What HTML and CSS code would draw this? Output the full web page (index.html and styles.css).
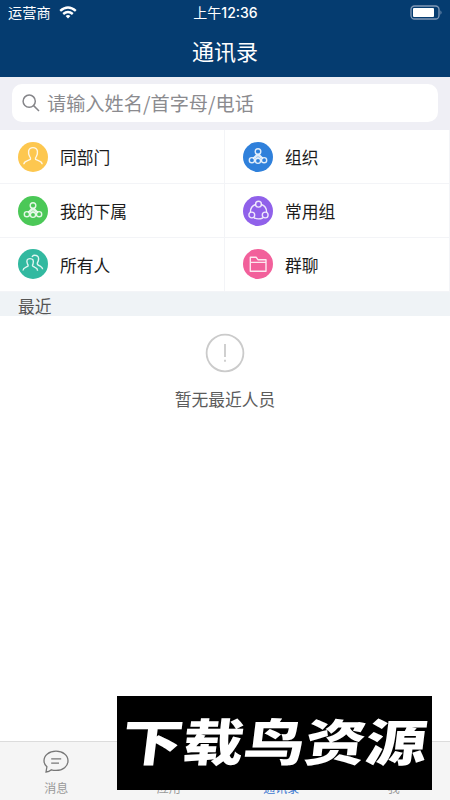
FILE: index.html
```html
<!DOCTYPE html>
<html lang="zh-CN">
<head>
<meta charset="utf-8">
<title>通讯录</title>
<link rel="stylesheet" href="styles.css">
</head>
<body>
<header class="header">
  <div class="status">
    <div class="carrier"><span>运营商</span>
      <svg width="18" height="13" viewBox="0 0 18 13" fill="none" stroke="#fff" stroke-width="2.4"><path d="M1.2 4.8Q9-2 16.8 4.8M4.2 8Q9 3.8 13.8 8"/><path d="M9 12.5 6.6 10.1Q9 8.1 11.4 10.1Z" fill="#fff" stroke="none"/></svg>
    </div>
    <div class="time">上午<b>12:36</b></div>
    <svg class="battery" width="33" height="15" viewBox="0 0 33 15"><rect x="1" y="1" width="28" height="13" rx="3.5" fill="none" stroke="#8299b7" stroke-width="1.3"/><rect x="3" y="3" width="21" height="9" rx="1" fill="#fff"/><path d="M30.5 5.2q2 2.3 0 4.6z" fill="#8299b7"/></svg>
  </div>
  <h1 class="title">通讯录</h1>
</header>
<div class="search">
  <div class="field">
    <svg width="18" height="18" viewBox="0 0 18 18" fill="none" stroke="#858589" stroke-width="1.5"><circle cx="7.2" cy="7.2" r="6.1"/><path d="m11.6 11.6 5.4 5.4"/></svg>
    <span>请输入姓名/首字母/电话</span>
  </div>
</div>
<main class="main">
  <div class="grid">
    <div class="cell"><svg class="icon" viewBox="0 0 30 30"><circle cx="15" cy="15" r="15" fill="#fdc74f"/><path d="M5.8 22.2Q6 19.8 9 18.8L12.4 17.4Q13 16.2 11.6 14.4Q10.2 11.8 10.6 9Q11.4 5.6 15 5.6T19.4 9Q19.8 11.8 18.4 14.4Q17 16.2 17.6 17.4L21 18.8Q24 19.8 24.2 22.2"/></svg><span>同部门</span></div>
    <div class="cell"><svg class="icon" viewBox="0 0 30 30"><circle cx="15" cy="15" r="15" fill="#2f80db"/><path d="m14 12.4-4 4.2m6-4.2 4 4.2M15 12.4v3.8m-1-3.8-1.5 4m3.5-4 1.5 4"/><circle cx="15" cy="9.5" r="2.8"/><circle cx="8.9" cy="18.2" r="2.6"/><circle cx="15" cy="18.8" r="2.6"/><circle cx="21.1" cy="18.2" r="2.6"/></svg><span>组织</span></div>
    <div class="cell"><svg class="icon" viewBox="0 0 30 30"><circle cx="15" cy="15" r="15" fill="#4bc857"/><path d="m14 12.4-4 4.2m6-4.2 4 4.2M15 12.4v3.8m-1-3.8-1.5 4m3.5-4 1.5 4"/><circle cx="15" cy="9.5" r="2.8"/><circle cx="8.9" cy="18.2" r="2.6"/><circle cx="15" cy="18.8" r="2.6"/><circle cx="21.1" cy="18.2" r="2.6"/></svg><span>我的下属</span></div>
    <div class="cell"><svg class="icon" viewBox="0 0 30 30"><circle cx="15" cy="15" r="15" fill="#9061ea"/><path d="M12.6 8.5Q7.4 10 7.4 16.2M18.4 8.5Q23.6 10 23.6 16.2M11 21.8Q15.5 24 20 21.8"/><circle cx="15.5" cy="8.2" r="2.9"/><circle cx="8.8" cy="19" r="2.9"/><circle cx="22.2" cy="19" r="2.9"/></svg><span>常用组</span></div>
    <div class="cell"><svg class="icon" viewBox="0 0 30 30"><circle cx="15" cy="15" r="15" fill="#32b9a0"/><path d="M5 21.5Q5.2 19.2 7.6 18.4L10 17.2Q10.5 16.3 9.5 15Q7.5 9.6 12 9.6T15 15Q14 16.5 14.8 17.2L17 18.3Q19.5 19.3 19.6 21.7M14 8Q15 6 17.3 6.3Q21.8 6.7 20.2 12.2Q18.5 15 20 16L22.2 17.1Q24.5 18.3 24.7 20.3"/></svg><span>所有人</span></div>
    <div class="cell"><svg class="icon" viewBox="0 0 30 30"><circle cx="15" cy="15" r="15" fill="#f2609b"/><path d="M7.3 8.2h5.8l1.8 2.5H23v11.5H7.3zM7.3 13.4H23"/></svg><span>群聊</span></div>
  </div>
  <div class="recent">最近</div>
  <div class="empty">
    <svg width="40" height="40" viewBox="0 0 40 40" fill="none" stroke="#cbcbcb" stroke-width="1.8"><circle cx="20" cy="20" r="18.4"/><path d="M20 11v13M20 26.8v1.9"/></svg>
    <p>暂无最近人员</p>
  </div>
</main>
<nav class="tabs">
  <div class="tab"><svg width="26" height="24" viewBox="0 0 26 24" fill="none" stroke="#777" stroke-width="1.3"><path d="M3 22 3.9 16.8Q1 14.2 1 10.8C1 5.2 6 1.2 13 1.2S25 5.2 25 10.8 20 20.4 13 20.4Q10.4 20.4 8.4 19.8Q6 21.8 3 22ZM8.2 8.8h10M8.2 13.2h7.8"/></svg><span>消息</span></div>
  <div class="tab"><span>应用</span></div>
  <div class="tab active"><span>通讯录</span></div>
  <div class="tab"><span>我</span></div>
</nav>
<div class="banner"><span>下载鸟资源</span></div>
</body>
</html>
```

FILE: styles.css
```css
* { box-sizing: border-box; }
body {
  margin: 0;
  width: 450px;
  height: 800px;
  display: flex;
  flex-direction: column;
  position: relative;
  overflow: hidden;
  background: #fff;
  font-family: "Noto Sans CJK SC", sans-serif;
  color: #1b1b1b;
}
svg { display: block; flex: none; }
.header { height: 77px; background: #053c70; color: #fff; }
.status {
  height: 25px;
  display: grid;
  grid-template-columns: 1fr auto 1fr;
  align-items: center;
  padding: 0 7px 0 8px;
  font-size: 14.2px;
  line-height: 25px;
}
.carrier { display: flex; align-items: center; gap: 8px; }
.carrier span { line-height: 23px; }
.time { font-size: 14px; }
.time b { font-family: Inter, sans-serif; font-size: 14px; font-weight: 500; }
.battery { justify-self: end; }
.title { margin: 0; font-size: 22px; font-weight: 400; line-height: 50px; text-align: center; }
.search { height: 53px; padding: 7px 12px 8px; background: #efeff5; }
.field {
  height: 38px;
  display: flex;
  align-items: center;
  gap: 7px;
  padding-left: 10px;
  border-radius: 10px;
  background: #fff;
  color: #8b8b8f;
  font-size: 19.2px;
  line-height: 38px;
}
.main { flex: 1; }
.grid { display: grid; grid-template-columns: 225px 225px; grid-template-rows: 54px 54px 53.5px; }
.cell {
  display: flex;
  align-items: center;
  gap: 12px;
  padding-left: 18px;
  border-right: 1px solid #f3f4f7;
  border-bottom: 1px solid #f3f4f7;
  font-size: 16.8px;
  line-height: 24px;
}
.cell span { padding-top: 1px; }
.icon { width: 30px; height: 30px; fill: none; stroke: #fff; stroke-opacity: .85; stroke-width: 1.4; stroke-linejoin: round; }
.icon > circle:first-child { stroke: none; }
.recent { height: 24.5px; padding-left: 18px; background: #eff3f6; color: #555; font-size: 16.8px; line-height: 28px; }
.empty { display: flex; flex-direction: column; align-items: center; padding-top: 17px; color: #5b5b5b; }
.empty p { margin: 14px 0 0; font-size: 16.8px; line-height: 24px; }
.tabs { height: 59px; display: flex; border-top: 1px solid #dcdcdc; background: #f5f5f5; }
.tab {
  flex: 1;
  display: flex;
  flex-direction: column;
  align-items: center;
  justify-content: space-between;
  padding: 8px 0 3px;
  color: #999;
  font-size: 12px;
  line-height: 19px;
}
.tab span { margin-top: auto; }
.active { color: #3c78d0; }
.banner {
  position: absolute;
  left: 117px;
  top: 696px;
  width: 315px;
  height: 94px;
  display: flex;
  align-items: center;
  justify-content: center;
  background: #000;
  color: #fff;
  font-size: 61px;
  font-weight: 900;
  line-height: 86px;
  white-space: nowrap;
}
.banner span { padding-bottom: 8px; transform: skewX(-7deg) scaleY(.82); }
```
